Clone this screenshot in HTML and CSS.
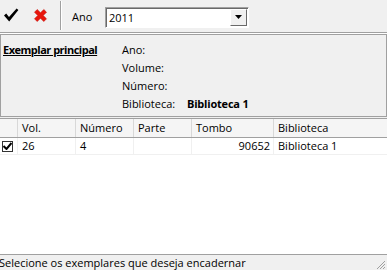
FILE: index.html
```html
<!DOCTYPE html>
<html>
<head>
<meta charset="utf-8">
<link rel="stylesheet" href="styles.css">
</head>
<body>
<div class="app">
  <div class="toolbar">
    <span class="tool check">
      <svg width="16" height="16" viewBox="0 0 16 16"><path d="M1 8.5 L3.2 6.6 L6 10 L13.6 1.5 L15.4 3 L6.2 14.5 Z" fill="#000"/></svg>
    </span>
    <span class="tool cross">
      <svg width="15" height="15" viewBox="0 0 15 15"><path d="M1.5 4.2 L4.2 1.5 L7.5 4.8 L10.8 1.5 L13.5 4.2 L10.2 7.5 L13.5 10.8 L10.8 13.5 L7.5 10.2 L4.2 13.5 L1.5 10.8 L4.8 7.5 Z" fill="#e8160c" stroke="#c8100a" stroke-width="0.6" stroke-linejoin="round"/></svg>
    </span>
    <span class="sep"></span>
    <span class="lbl">Ano</span>
    <div class="combo">
      <span class="combo-text">2011</span>
      <span class="combo-btn"><svg width="7" height="4" viewBox="0 0 7 4"><path d="M0 0 H7 L3.5 4 Z" fill="#000"/></svg></span>
    </div>
  </div>
  <div class="panel">
    <div class="panel-title">Exemplar principal</div>
    <div class="fields">
      <div class="field"><span class="fname">Ano:</span></div>
      <div class="field"><span class="fname">Volume:</span></div>
      <div class="field"><span class="fname">Número:</span></div>
      <div class="field"><span class="fname">Biblioteca:</span><span class="fval">Biblioteca 1</span></div>
    </div>
  </div>
  <div class="grid">
    <div class="row head">
      <div class="c c0"></div>
      <div class="c c1">Vol.</div>
      <div class="c c2">Número</div>
      <div class="c c3">Parte</div>
      <div class="c c4">Tombo</div>
      <div class="c c5">Biblioteca</div>
    </div>
    <div class="row data">
      <div class="c c0"><span class="cb"><svg width="9" height="8" viewBox="0 0 9 8"><path d="M0.5 4 L3.5 7 L8.5 1" fill="none" stroke="#000" stroke-width="2"/></svg></span></div>
      <div class="c c1">26</div>
      <div class="c c2">4</div>
      <div class="c c3"></div>
      <div class="c c4 num">90652</div>
      <div class="c c5">Biblioteca 1</div>
    </div>
    <div class="fill"></div>
  </div>
  <div class="status">
    <span class="status-text">Selecione os exemplares que deseja encadernar</span>
    <span class="grip">
      <svg width="11" height="11" viewBox="0 0 11 11"><path d="M10 2 L2 10 M10 5 L5 10 M10 8 L8 10" stroke="#a0a0a0" stroke-width="1"/></svg>
    </span>
  </div>
</div>
</body>
</html>
```
FILE: styles.css
```css
html, body {
  margin: 0;
  padding: 0;
}
body {
  width: 387px;
  height: 270px;
  overflow: hidden;
  font-family: "Open Sans", "Liberation Sans", Arial, sans-serif;
  font-size: 11px;
  color: #000;
  background: #f0f0f0;
}
.app {
  width: 387px;
  height: 270px;
  display: flex;
  flex-direction: column;
}
.toolbar {
  flex: none;
  display: flex;
  align-items: center;
  border-bottom: 1px solid #a0a0a0;
  box-shadow: 0 1px 0 #ffffff;
  box-sizing: border-box;
  height: 33px;
}
.tool {
  display: flex;
  align-items: center;
  justify-content: center;
}
.check {
  margin-left: 3px;
  width: 16px;
  height: 16px;
  margin-top: -3px;
}
.cross {
  margin-left: 14px;
  width: 15px;
  height: 15px;
  margin-top: -1px;
}
.sep {
  width: 1px;
  align-self: stretch;
  margin: 1px 0 2px 12px;
  background: #a0a0a0;
  box-shadow: 1px 0 0 #ffffff;
}
.lbl {
  margin-left: 11px;
  width: 34px;
  margin-top: 1px;
}
.combo {
  width: 144px;
  height: 21px;
  box-sizing: border-box;
  background: #fff;
  border: 1px solid;
  border-color: #a0a0a0 #fff #fff #a0a0a0;
  box-shadow: inset 1px 1px 0 #696969;
  display: flex;
  align-items: center;
  margin-top: 2px;
  margin-left: -1px;
}
.combo-text {
  flex: 1;
  padding-left: 3px;
}
.combo-btn {
  width: 17px;
  height: 17px;
  box-sizing: border-box;
  background: #f0f0f0;
  border: 1px solid;
  border-color: #fff #696969 #696969 #fff;
  display: flex;
  align-items: center;
  justify-content: center;
  margin-right: 1px;
}
.panel {
  margin-top: 1px;
  height: 83px;
  flex: none;
  box-sizing: border-box;
  border: 1px solid #a0a0a0;
  display: flex;
  padding: 6px 0 0 2px;
}
.panel-title {
  width: 119px;
  font-weight: bold;
  text-decoration: underline;
  letter-spacing: -0.5px;
  line-height: 18px;
}
.fields {
  display: flex;
  flex-direction: column;
}
.field {
  height: 18px;
  line-height: 18px;
  display: flex;
}
.fname {
  width: 65px;
}
.fval {
  font-weight: bold;
  letter-spacing: -0.2px;
}
.grid {
  margin-top: 1px;
  flex: 1;
  display: flex;
  flex-direction: column;
  border-top: 1px solid #a0a0a0;
  background: #fff;
}
.row {
  display: flex;
  flex: none;
}
.head {
  height: 19px;
  box-sizing: border-box;
  background: #f5f5f5;
  border-bottom: 1px solid #a0a0a0;
}
.data {
  height: 17px;
  box-sizing: border-box;
  border-bottom: 1px solid #f0f0f0;
}
.c {
  box-sizing: border-box;
  padding-left: 4px;
  border-right: 1px solid #d8d8d8;
  line-height: 18px;
  white-space: nowrap;
  overflow: hidden;
}
.data .c {
  border-right-color: #f0f0f0;
  line-height: 16px;
}
.c0 { width: 18px; padding-left: 0; display: flex; align-items: center; }
.c1 { width: 58px; }
.c2 { width: 58px; }
.c3 { width: 58px; }
.c4 { width: 82px; }
.c5 { flex: 1; border-right: none; }
.num { text-align: right; padding-right: 3px; }
.cb {
  margin-left: 2px;
  width: 11px;
  height: 11px;
  box-sizing: border-box;
  border: 1px solid #333;
  background: #fff;
  display: flex;
  align-items: center;
  justify-content: center;
}
.fill {
  flex: 1;
  background: #fff;
}
.status {
  height: 15px;
  flex: none;
  border-top: 1px solid #a0a0a0;
  display: flex;
  align-items: center;
  position: relative;
}
.status-text {
  margin-left: -1px;
  flex: 1;
  line-height: 14px;
}
.grip {
  width: 11px;
  height: 11px;
  align-self: flex-end;
  margin-right: 1px;
  display: flex;
}
```
